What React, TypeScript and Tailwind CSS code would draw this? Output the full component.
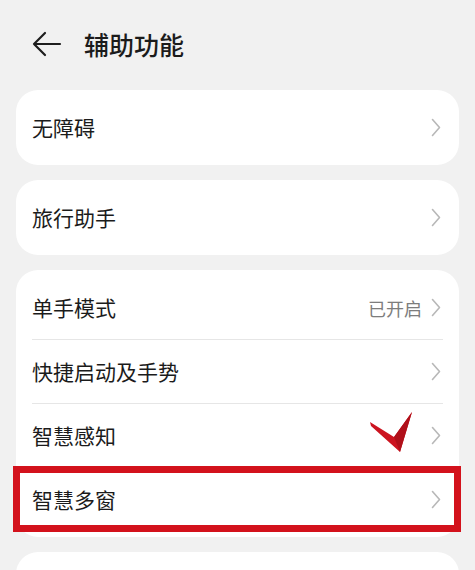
import React from "react";

const Chevron = () => (
  <svg width="10" height="19" viewBox="0 0 10 19" fill="none" className="shrink-0">
    <polyline points="1.5,1.5 8.5,9.5 1.5,17.5" stroke="#b8b8b8" strokeWidth="1.6" strokeLinecap="round" strokeLinejoin="round" />
  </svg>
);

const Row = ({ label, value, children }: { label: string; value?: string; children?: React.ReactNode }) => (
  <div className="relative flex h-[63px] items-center justify-between pr-[2px]">
    <span className="text-[21px] leading-none text-[#1b1b1b]">{label}</span>
    <div className="flex items-center gap-[9px]">
      {value && <span className="text-[18px] leading-none text-[#7d7d7d]">{value}</span>}
      <Chevron />
    </div>
    {children}
  </div>
);

export default function App() {
  return (
    <div
      className="h-[570px] w-[475px] overflow-hidden bg-[#f1f1f1]"
      style={{ fontFamily: '"Noto Sans CJK SC", "Noto Sans", sans-serif' }}
    >
      <div className="flex h-[88px] items-center pl-[32px]">
        <svg width="30" height="26" viewBox="0 0 30 26" fill="none">
          <path d="M28 13H2M13 2L2 13l11 11" stroke="#1e1e1e" strokeWidth="2.2" strokeLinecap="round" strokeLinejoin="round" />
        </svg>
        <span className="ml-[22px] text-[25px] font-medium leading-none text-[#1b1b1b]">辅助功能</span>
      </div>
      <div className="mt-[2px] flex flex-col gap-[15px] px-4">
        <div className="flex h-[75px] items-center rounded-[22px] bg-white px-4">
          <div className="flex-1">
            <Row label="无障碍" />
          </div>
        </div>
        <div className="flex h-[75px] items-center rounded-[22px] bg-white px-4">
          <div className="flex-1">
            <Row label="旅行助手" />
          </div>
        </div>
        <div className="flex flex-col rounded-[22px] bg-white px-4 pb-[6px] pt-[6px]">
          <Row label="单手模式" value="已开启" />
          <div className="h-px bg-[#e6e6e6]" />
          <Row label="快捷启动及手势" />
          <div className="h-px bg-[#e6e6e6]" />
          <Row label="智慧感知">
            <svg className="absolute left-[336px] top-[6px]" width="46" height="44" viewBox="0 0 46 44">
              <polygon points="2,12 26,27 44,2 32,42 3,16" fill="#cc1420" />
              <polygon points="26,27 44,2 32,42" fill="#b0101a" />
            </svg>
          </Row>
          <div className="h-px bg-[#e6e6e6]" />
          <Row label="智慧多窗">
            <div className="pointer-events-none absolute -bottom-[1px] -left-[19px] -right-[18px] -top-[2px] border-[7px] border-[#d3121c]" />
          </Row>
        </div>
        <div className="h-[40px] rounded-t-[22px] bg-white" />
      </div>
    </div>
  );
}
